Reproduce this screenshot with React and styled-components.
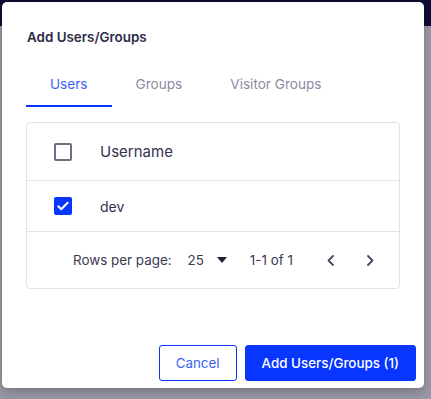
import React from 'react';
import styled, { createGlobalStyle } from 'styled-components';

const GlobalStyle = createGlobalStyle`
  html, body {
    margin: 0;
    padding: 0;
    background: #9b9aa8;
  }
  body {
    font-family: Inter, "Noto Sans", sans-serif;
  }
`;

const Backdrop = styled.div`
  position: relative;
  width: 431px;
  height: 399px;
  overflow: hidden;
  background: #9b9aa8;
`;

const TopBar = styled.div`
  height: 26px;
  background: #0e0c35;
`;

// the dialog lies over the dimmed page
const Dialog = styled.div`
  position: absolute;
  left: 2px;
  top: 2px;
  width: 422px;
  height: 386px;
  box-sizing: border-box;
  background: #fff;
  border-radius: 5px;
  box-shadow: 0 4px 12px rgba(0, 0, 0, 0.25);
  display: flex;
  flex-direction: column;
  padding: 0 8px 7px 24px;
`;

const Title = styled.h2`
  margin: 27px 0 0 1px;
  font-size: 13.4px;
  line-height: 16px;
  font-weight: 600;
  color: #2d2c47;
`;

const Tabs = styled.div`
  display: flex;
  margin-top: 27px;
  height: 35px;
`;

const Tab = styled.div`
  box-sizing: border-box;
  height: 35px;
  padding: 3px 24px 0;
  font-size: 13.6px;
  line-height: 18px;
  color: ${(p) => (p.active ? '#3c63f6' : '#8b8a9f')};
  border-bottom: 2px solid ${(p) => (p.active ? '#0836ff' : 'transparent')};
`;

const Card = styled.div`
  margin: 15px 16px 0 0;
  border: 1px solid #e1e1e8;
  border-radius: 4px;
`;

const Row = styled.div`
  display: flex;
  align-items: center;
  height: ${(p) => p.h}px;
  border-bottom: 1px solid #e1e1e8;
  font-size: ${(p) => p.fs}px;
  color: #33324d;
`;

const CheckCell = styled.div`
  width: 73px;
  display: flex;
  padding-left: 27px;
  box-sizing: border-box;
`;

const Box = styled.div`
  width: 18px;
  height: 18px;
  box-sizing: border-box;
  border-radius: 2px;
  border: ${(p) => (p.checked ? 'none' : '2px solid #6f6e85')};
  background: ${(p) => (p.checked ? '#0836ff' : '#fff')};
  display: flex;
  align-items: center;
  justify-content: center;
`;

const Footer = styled.div`
  display: flex;
  align-items: center;
  height: 56px;
  padding-left: 46px;
  font-size: 13.4px;
  color: #3a3950;
`;

const Select = styled.div`
  display: flex;
  align-items: center;
  margin-left: 16px;
  gap: 13px;
`;

const Range = styled.span`
  margin-left: 23px;
`;

const Pager = styled.div`
  display: flex;
  align-items: center;
  margin-left: 34px;
  gap: 33px;
`;

const Spacer = styled.div`
  flex: 1;
`;

const Actions = styled.div`
  display: flex;
  justify-content: flex-end;
  gap: 8px;
`;

const Button = styled.button`
  height: 36px;
  box-sizing: border-box;
  font-family: inherit;
  font-size: 13.4px;
  border-radius: 3px;
  padding: 0 16px;
  border: 1px solid #0836ff;
  background: ${(p) => (p.primary ? '#0836ff' : '#fff')};
  color: ${(p) => (p.primary ? '#fff' : '#3c63f6')};
  font-weight: ${(p) => (p.primary ? 500 : 400)};
`;

const Chevron = ({ dir }) => (
  <svg width="7" height="11" viewBox="0 0 7 11" fill="none" stroke="#4a4960" strokeWidth="1.8" strokeLinecap="round" strokeLinejoin="round">
    {dir === 'left' ? <path d="M6 1L1.5 5.5 6 10" /> : <path d="M1 1l4.5 4.5L1 10" />}
  </svg>
);

const App = () => {
  return (
    <>
      <GlobalStyle />
      <Backdrop>
        <TopBar />
        <Dialog>
          <Title>Add Users/Groups</Title>
          <Tabs>
            <Tab active>Users</Tab>
            <Tab>Groups</Tab>
            <Tab>Visitor Groups</Tab>
          </Tabs>
          <Card>
            <Row h={57} fs={15}>
              <CheckCell>
                <Box />
              </CheckCell>
              Username
            </Row>
            <Row h={50} fs={14}>
              <CheckCell>
                <Box checked>
                  <svg width="14" height="14" viewBox="0 0 24 24" fill="none" stroke="#fff" strokeWidth="3.5" strokeLinecap="round" strokeLinejoin="round">
                    <path d="M4 12.5l5 5L20 6.5" />
                  </svg>
                </Box>
              </CheckCell>
              dev
            </Row>
            <Footer>
              Rows per page:
              <Select>
                <span>25</span>
                <svg width="10" height="6" viewBox="0 0 10 6">
                  <path d="M0 0h10L5 6z" fill="#1f1e33" />
                </svg>
              </Select>
              <Range>1-1 of 1</Range>
              <Pager>
                <Chevron dir="left" />
                <Chevron dir="right" />
              </Pager>
            </Footer>
          </Card>
          <Spacer />
          <Actions>
            <Button>Cancel</Button>
            <Button primary>Add Users/Groups (1)</Button>
          </Actions>
        </Dialog>
      </Backdrop>
    </>
  );
};

export default App;
